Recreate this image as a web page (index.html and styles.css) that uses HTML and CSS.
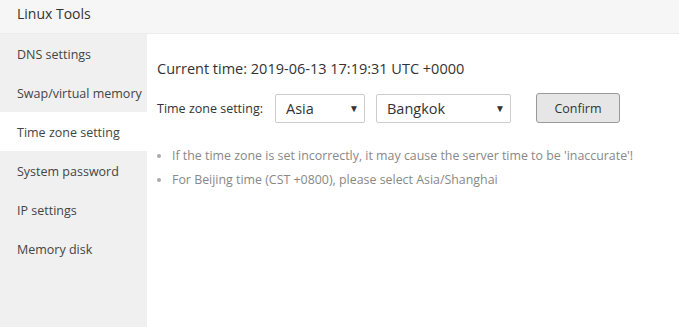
FILE: index.html
```html
<!DOCTYPE html>
<html lang="en">
<head>
  <meta charset="UTF-8">
  <title>Linux Tools</title>
  <link rel="stylesheet" href="styles.css">
</head>
<body>

  <div class="header">Linux Tools</div>

  <div class="layout">
    <ul class="sidebar">
      <li>DNS settings</li>
      <li>Swap/virtual memory</li>
      <li class="active">Time zone setting</li>
      <li>System password</li>
      <li>IP settings</li>
      <li>Memory disk</li>
    </ul>

    <div class="content">
      <div class="current-time">Current time: 2019-06-13 17:19:31 UTC +0000</div>

      <div class="tz-row">
        <span class="tz-label">Time zone setting:</span>
        <div class="select select-area">
          <span>Asia</span>
          <span class="arrow">&#9660;</span>
        </div>
        <div class="select select-city">
          <span>Bangkok</span>
          <span class="arrow">&#9660;</span>
        </div>
        <button class="btn-confirm">Confirm</button>
      </div>

      <ul class="tips">
        <li>If the time zone is set incorrectly, it may cause the server time to be 'inaccurate'!</li>
        <li>For Beijing time (CST +0800), please select Asia/Shanghai</li>
      </ul>
    </div>
  </div>

</body>
</html>
```

FILE: styles.css
```css
body {
  margin: 0;
  font-family: 'Open Sans', 'Noto Sans', sans-serif;
  color: #333;
  background: #fff;
}

.header {
  height: 33px;
  line-height: 28px;
  padding-left: 17px;
  font-size: 14px;
  background: #f6f6f6;
  border-bottom: 1px solid #ececec;
}

.layout {
  display: flex;
  height: 293px;
}

.sidebar {
  list-style: none;
  margin: 0;
  padding: 0;
  width: 147px;
  background: #f0f0f0;
}

.sidebar li {
  box-sizing: border-box;
  height: 39px;
  line-height: 39px;
  padding: 1px 0 0 17px;
  font-size: 12.5px;
  color: #444;
  white-space: nowrap;
}

.sidebar li.active {
  background: #fff;
}

.content {
  flex: 1;
  padding: 25px 0 0 10px;
}

.current-time {
  font-size: 14.5px;
  line-height: 20px;
}

.tz-row {
  display: flex;
  align-items: center;
  margin-top: 14px;
}

.tz-label {
  font-size: 12.5px;
  width: 118px;
}

.select {
  box-sizing: border-box;
  height: 29px;
  border: 1px solid #ccc;
  border-radius: 2px;
  display: flex;
  align-items: center;
  justify-content: space-between;
  padding: 0 5px 0 10px;
  font-size: 14.5px;
  color: #333;
}

.select .arrow {
  font-size: 10px;
  color: #333;
}

.select-area {
  width: 90px;
}

.select-city {
  width: 135px;
  margin-left: 11px;
}

.btn-confirm {
  box-sizing: border-box;
  margin-left: 25px;
  width: 84px;
  height: 30px;
  background: #e6e6e6;
  border: 1px solid #999;
  border-radius: 3px;
  font-family: inherit;
  font-size: 12.5px;
  color: #333;
}

.tips {
  margin: 21px 0 0;
  padding: 0 0 0 15px;
  font-size: 12.4px;
  color: #888;
}

.tips li {
  line-height: 24px;
}

.tips li::marker {
  color: #aaa;
}
```
